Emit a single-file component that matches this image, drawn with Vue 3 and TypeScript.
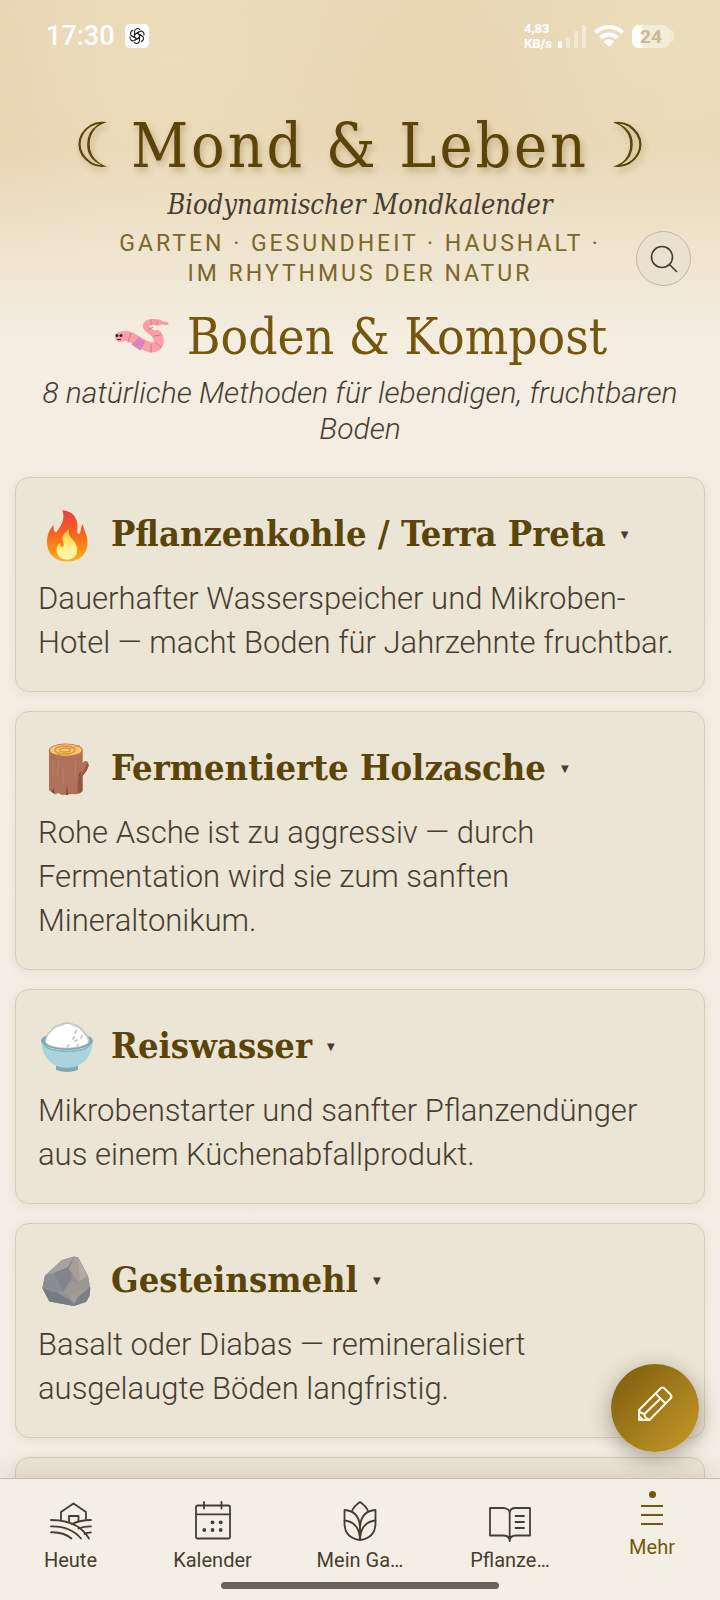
<script setup lang="ts">
import { ref } from 'vue'

interface Method {
  id: string
  title: string
  text: string
}

interface Tab {
  id: string
  label: string
}

const methods: Method[] = [
  { id: 'fire', title: 'Pflanzenkohle / Terra Preta', text: 'Dauerhafter Wasserspeicher und Mikroben-Hotel — macht Boden für Jahrzehnte fruchtbar.' },
  { id: 'wood', title: 'Fermentierte Holzasche', text: 'Rohe Asche ist zu aggressiv — durch Fermentation wird sie zum sanften Mineraltonikum.' },
  { id: 'rice', title: 'Reiswasser', text: 'Mikrobenstarter und sanfter Pflanzendünger aus einem Küchenabfallprodukt.' },
  { id: 'rock', title: 'Gesteinsmehl', text: 'Basalt oder Diabas — remineralisiert ausgelaugte Böden langfristig.' },
]

const tabs: Tab[] = [
  { id: 'today', label: 'Heute' },
  { id: 'calendar', label: 'Kalender' },
  { id: 'garden', label: 'Mein Ga…' },
  { id: 'plants', label: 'Pflanze…' },
  { id: 'more', label: 'Mehr' },
]

const activeTab = ref('more')
</script>

<template>
  <div class="app">
    <div class="status">
      <div class="status-left">
        <span class="clock">17:30</span>
        <svg class="app-badge" viewBox="0 0 24 24" aria-hidden="true">
          <rect width="24" height="24" rx="5" fill="#fff" />
          <g fill="none" stroke="#222" stroke-width="1.1">
            <path v-for="a in [0, 60, 120, 180, 240, 300]" :key="a" :transform="`rotate(${a} 12 12)`" d="M9.5 13.4V7.6a3 3 0 0 1 5.4-1.8M9.5 10.6l4.9-2.8" />
          </g>
        </svg>
      </div>
      <div class="status-right">
        <span class="speed"><span>4,83</span><span>KB/s</span></span>
        <svg class="signal" viewBox="0 0 28 23" aria-hidden="true" fill="#fff">
          <rect x="0" y="16" width="4" height="7" rx="1" />
          <g opacity=".4">
            <rect x="8" y="12" width="4" height="11" rx="1" />
            <rect x="16" y="6" width="4" height="17" rx="1" />
            <rect x="24" y="0" width="4" height="23" rx="1" />
          </g>
        </svg>
        <svg class="wifi" viewBox="0 0 30 22" aria-hidden="true">
          <g fill="none" stroke="#fff" stroke-width="4">
            <path d="M1.500 7.500A19.500 19.500 0 0 1 28.500 7.500" />
            <path d="M6.500 13A12 12 0 0 1 23.500 13" />
          </g>
          <path d="M9.500 16.500A8 8 0 0 1 20.500 16.500L16 21a1.500 1.500 0 0 1-2 0z" fill="#fff" />
        </svg>
        <span class="battery"><span class="cell">24</span><span class="cap"></span></span>
      </div>
    </div>

    <header class="header">
      <h1 class="brand"><span class="moon">☾</span><span>Mond &amp; Leben</span><span class="moon">☽</span></h1>
      <p class="claim">Biodynamischer Mondkalender</p>
      <p class="topics">Garten · Gesundheit · Haushalt · im Rhythmus der Natur</p>
      <button class="search" type="button" aria-label="Suche">
        <svg viewBox="0 0 28 28" aria-hidden="true" fill="none" stroke="#463d30" stroke-width="1.600" stroke-linecap="round">
          <circle cx="12" cy="12" r="10.500" />
          <path d="M19.700 19.700L26.500 26.500" />
        </svg>
      </button>
    </header>

    <main class="content">
      <h2 class="section-title">
        <svg class="worm" viewBox="0 0 58 40" aria-hidden="true" fill="none" stroke-linecap="round">
          <path d="M34 8C36 3 43 5 54 6.500" stroke="#f597a0" stroke-width="3" />
          <path d="M45 23C44 16 31 13 33 8C35 4 40 5 46 5.500" stroke="#f79ca4" stroke-width="6" stroke-linejoin="round" />
          <path d="M7 20C18 15 25 28 38 30.500C47 30 47 23 44 18" stroke="#f9a0a8" stroke-width="10" />
          <path d="M22 24C25 26.500 27 27.500 30 29" stroke="#d984bd" stroke-width="10" stroke-linecap="butt" />
          <path d="M18 16.500L15 25M38 27V35M43 26L48 30M41 19L48 18M35 13L40 10M38 3V8M44 4V8" stroke="#d97784" stroke-width="1" />
          <g fill="#30262a"><circle cx="4" cy="18.500" r="1.500" /><circle cx="8" cy="18.500" r="1.500" /></g>
          <path d="M4.500 22.500H7.500" stroke="#30262a" stroke-width="1" />
        </svg>
        <span>Boden &amp; Kompost</span>
      </h2>
      <p class="intro">8 natürliche Methoden für lebendigen, fruchtbaren Boden</p>

      <section class="cards">
        <article v-for="m in methods" :key="m.id" class="card">
          <h3 class="card-title">
            <button class="toggle" type="button" aria-expanded="false">
              <svg v-if="m.id === 'fire'" class="pic" viewBox="0 0 58 56" aria-hidden="true">
                <defs>
                  <linearGradient id="flame" x1="0" y1="0" x2="0" y2="1">
                    <stop offset="0" stop-color="#e5403d" />
                    <stop offset=".45" stop-color="#f8631f" />
                    <stop offset=".8" stop-color="#fb9412" />
                    <stop offset="1" stop-color="#fcb42c" />
                  </linearGradient>
                  <linearGradient id="flame-core" x1="0" y1="0" x2="0" y2="1">
                    <stop offset="0" stop-color="#ffc928" />
                    <stop offset=".6" stop-color="#fff08a" />
                    <stop offset="1" stop-color="#fff3b5" />
                  </linearGradient>
                </defs>
                <path d="M24.300 2.300C34 3 39 9 39.500 17C40 21 38 24.500 40.500 26C43.500 26 42 19 45 16C45 22 49.500 25 49.500 34C49.500 47 41 53.500 29.500 53.500C17 53.500 9 46 9 34C9 26 12 21 15.500 17C16 20 15 23 18 24.500C22 20 28 11 24.300 2.300Z" fill="url(#flame)" />
                <path d="M31 21C30 27 32 29 36 33C42 41 40 51.500 29 51.500C22 51.500 18.500 47 18.700 41C19 38 20 36 22 34.500C22.500 37 22 39 24.500 39C28 37 23 32 25 28C26.500 24.500 29 24 31 21Z" fill="url(#flame-core)" />
              </svg>
              <svg v-else-if="m.id === 'wood'" class="pic" viewBox="0 0 58 56" aria-hidden="true">
                <path d="M11 9V47Q11 50 15 50L17 52.500L20 51L24 53L35 52Q41 53 44.500 49V34Q49 29 50.700 24Q51 18.500 46.500 19L44.700 21V9Z" fill="#b0715a" />
                <path d="M44.500 49V34Q49 29 50.700 24Q50.500 21.500 49 20.500Q47 28 42 34Q38 40 40 51Q43 51 44.500 49Z" fill="#925643" />
                <path d="M21 18L19 34M25 26V41M38 18L37 35M15 18V33" stroke="#bd816a" fill="none" />
                <path d="M15.500 46L16.500 52L13.500 50ZM29 43L30 53H28ZM41 32L44 28L40 38Z" fill="#78412f" />
                <ellipse cx="27.800" cy="8.500" rx="17" ry="7" fill="#b77742" />
                <ellipse cx="27.800" cy="8" rx="15.800" ry="5.800" fill="#f8c775" />
                <g fill="none" stroke="#dc943a"><ellipse cx="27" cy="8" rx="10" ry="4" stroke-width="1.500" /><ellipse cx="27" cy="8" rx="5" ry="2" stroke-width="1.500" /></g>
                <path d="M31 7L42 3.500M22 12L18 13" stroke="#dc943a" fill="none" />
              </svg>
              <svg v-else-if="m.id === 'rice'" class="pic" viewBox="0 0 58 56" aria-hidden="true">
                <path d="M18 44H40V50Q29 54 18 50Z" fill="#7faab2" />
                <ellipse cx="29" cy="21" rx="26" ry="9" fill="#79a9b2" />
                <path d="M3.300 21Q4 40 20 46.500Q29 49 38 46.500Q54 40 55 21Q51 30 29 30.500Q7 30 3.300 21Z" fill="#a9d4db" />
                <path d="M3.300 21Q7 30 29 30.500Q51 30 55 21Q53 28 44 30.500Q29 34 14 30.500Q5 28 3.300 21Z" fill="#88b9c1" />
                <path d="M7 22C7 17 9 13 12 11C15 6 20 4 24 3.500C28 1 33 2 36 4C41 5 45 8 47 12C50 15 52 19 51.500 22C46 30 12 31 7 22Z" fill="#c9c9c4" />
                <path d="M8 22C9 17 10 14 13 12C16 8 20 6 25 5.500C29 3 32 4 35.500 6C40 7 43 9 45 13C48 16 50 19 50 22C46 29 12 30 8 22Z" fill="#fff" />
                <path d="M37 13L38.500 10.500M43 18L44 15.500M35 19L36.500 17M29 27L31 25M39 26L40.500 24.500M37 21L39 20" stroke="#c3c3c3" stroke-width="1.700" stroke-linecap="round" fill="none" />
              </svg>
              <svg v-else class="pic" viewBox="0 0 58 56" aria-hidden="true">
                <path d="M36 2.500L40.300 3.500L50 22L52.300 35L51.500 42L48 48L36 52L11.300 47.500L4.300 34L7 21.500L24 6Z" fill="#929091" />
                <path d="M36 2.500L24 6L7 21.500L16 19L30 13Z" fill="#a5a2a2" />
                <path d="M30 13L36 2.500L33 26L25 38L16 19Z" fill="#83838a" />
                <path d="M36 2.500L40.300 3.500L50 22L40 28L31 15Z" fill="#a79d99" />
                <path d="M50 22L52.300 35L40 37L33 46L31 42L25 38L33 26L40 28Z" fill="#9c9895" />
                <path d="M40 3.500L50 22L42 27Z" fill="#b5aaa4" />
                <path d="M33 44L40 37L52.300 33L51.500 42L48 48L36 52Z" fill="#7b7f82" />
                <path d="M31 42L39 37L52 33L40 43L36 50Z" fill="#a39b96" />
                <path d="M4.300 34L16 37L32 46L36 52L11.300 47.500Z" fill="#737c83" />
                <path d="M7 21.500L16 19L25 38L14 38L4.300 34Z" fill="#8b8d91" />
              </svg>
              <span>{{ m.title }}</span>
              <span class="caret" aria-hidden="true">▼</span>
            </button>
          </h3>
          <p class="card-text">{{ m.text }}</p>
        </article>
        <article class="card" aria-hidden="true"></article>
      </section>
    </main>

    <button class="fab" type="button" aria-label="Notiz schreiben">
      <svg viewBox="0 0 38 38" aria-hidden="true" fill="none" stroke="#fff8e6" stroke-width="2" stroke-linejoin="round" stroke-linecap="round">
        <path d="M3 35V25L24.500 3.500Q26.500 1.500 28.500 3.500L34.500 9.500Q36.500 11.500 34.500 13.500L13.500 35Z" />
        <path d="M19.500 8.500L29.500 18.500M8 29.500L24.500 13.500M3 25L5 28Q9 28 9 32L13.500 35M3 31L7 35" />
      </svg>
    </button>

    <nav class="tabs" aria-label="Hauptnavigation">
      <button v-for="t in tabs" :key="t.id" class="tab" :class="{ active: t.id === activeTab }" type="button" @click="activeTab = t.id">
        <span v-if="t.id === activeTab" class="dot"></span>
        <svg v-if="t.id === 'today'" class="icon" viewBox="0 0 42 42" aria-hidden="true">
          <path d="M11 19.500V12L23.500 3.500L36 12V19M19 22V16H28.500V21" />
          <path d="M1 20C16 20 31 25 39 38.500M1 26.300C13 26 24 30 31 38.500M1 32.300C9 32 16 34 21.500 38.500" />
          <path d="M41 20C33 20 28 21 22 24M41 26.300C36 26.300 32 27 28.500 28.500M41 32.300Q37 32.300 34.500 34" />
        </svg>
        <svg v-else-if="t.id === 'calendar'" class="icon" viewBox="0 0 42 42" aria-hidden="true">
          <rect x="4" y="5.500" width="34" height="33" rx="1.500" />
          <path d="M4 14.300H38M12 2V8.500M29.500 2V8.500" />
          <g class="filled"><circle cx="20.500" cy="22.300" r="1.900" /><circle cx="28.700" cy="22.300" r="1.900" /><circle cx="12.300" cy="30" r="1.900" /><circle cx="20.500" cy="30" r="1.900" /><circle cx="28.700" cy="30" r="1.900" /></g>
        </svg>
        <svg v-else-if="t.id === 'garden'" class="icon" viewBox="0 0 42 42" aria-hidden="true">
          <path d="M13 11Q15 6 21 2Q27 6 29 11" />
          <path d="M5.500 10V24Q6 38 21 40Q36 38 36.500 24V10Q21 11 21 29V40M5.500 10Q21 11 21 29" />
          <path d="M5.500 20.500Q20 22 21 39M36.500 20.500Q22 22 21 39" />
        </svg>
        <svg v-else-if="t.id === 'plants'" class="icon" viewBox="0 0 42 42" aria-hidden="true">
          <path d="M1 8H14C18 8 20.700 10 20.700 13C20.700 10 23 8 27 8H41V35.500H27C23 35.500 20.700 37 20.700 41C20.700 37 18 35.500 14 35.500H1ZM20.700 13V40M26.500 16H35M26.500 22H35M26.500 28H35" />
        </svg>
        <svg v-else class="menu" viewBox="0 0 22 22" aria-hidden="true">
          <path d="M0 2H22M0 11H22M0 20H22" />
        </svg>
        <span class="tab-label">{{ t.label }}</span>
      </button>
      <span class="home-bar"></span>
    </nav>
  </div>
</template>

<style>
html,
body {
  margin: 0;
  background: #f2ede2;
}
</style>

<style scoped>
.app {
  position: relative;
  display: flex;
  flex-direction: column;
  height: 100vh;
  overflow: hidden;
  color: #463d30;
  font-family: Roboto, "Liberation Sans", sans-serif;
  background:
    linear-gradient(to bottom, rgba(244, 237, 225, 0) 150px, rgba(244, 237, 225, 0.5) 240px, #f4ede1 340px, #f2eee4 100%),
    radial-gradient(260px 180px at 24% 60px, rgba(238, 222, 188, 0.6), transparent),
    radial-gradient(200px 180px at 92% 40px, rgba(235, 221, 187, 0.7), transparent),
    radial-gradient(120px 220px at 0 90px, rgba(229, 207, 172, 0.6), transparent),
    radial-gradient(260px 160px at 60% 90px, rgba(229, 208, 172, 0.5), transparent),
    #ead9b7;
}

h1,
h2,
h3,
p {
  margin: 0;
}

button {
  padding: 0;
  border: 0;
  background: none;
  color: inherit;
  font: inherit;
  cursor: pointer;
}

svg {
  display: block;
  flex: none;
}

.status {
  display: flex;
  flex: none;
  align-items: center;
  justify-content: space-between;
  height: 72px;
  padding: 0 46px;
  color: #fff;
}

.status-left,
.status-right {
  display: flex;
  align-items: center;
}

.status-left {
  gap: 10px;
}

.clock {
  font-size: 27px;
  font-weight: 500;
}

.app-badge {
  width: 24px;
  height: 24px;
}

.speed {
  display: flex;
  flex-direction: column;
  margin-right: 6px;
  font-size: 13px;
  font-weight: 700;
  line-height: 15px;
}

.signal {
  width: 28px;
  height: 23px;
  margin-right: 8px;
}

.wifi {
  width: 30px;
  height: 22px;
  margin-right: 8px;
}

.battery {
  display: flex;
  align-items: center;
}

.cell {
  width: 38px;
  border-radius: 7px;
  background: linear-gradient(to right, #fff 10px, rgba(255, 255, 255, 0.45) 10px);
  color: #c9b893;
  font-size: 19px;
  font-weight: 700;
  line-height: 23px;
  text-align: center;
}

.cap {
  width: 4px;
  height: 12px;
  border-radius: 0 6px 6px 0;
  background: rgba(255, 255, 255, 0.4);
}

.header {
  position: relative;
  display: flex;
  flex: none;
  flex-direction: column;
  align-items: center;
  padding: 36px 32px 0;
  text-align: center;
}

.brand {
  display: flex;
  align-items: center;
  gap: 2px;
  color: #5a4409;
  font: 400 62px/76px "DejaVu Serif Condensed", "Noto Serif", "DejaVu Serif", serif;
  letter-spacing: 3px;
  text-shadow: 2px 4px 6px rgba(90, 68, 9, 0.3);
  white-space: nowrap;
}

.moon {
  font-family: "DejaVu Sans", sans-serif;
  letter-spacing: 0;
}

.claim {
  margin-top: 3px;
  font: italic 27px/36px "DejaVu Serif Condensed", "Noto Serif", "DejaVu Serif", serif;
}

.topics {
  max-width: 520px;
  margin-top: 6px;
  color: #7b6729;
  font-size: 23px;
  line-height: 30px;
  letter-spacing: 3px;
  text-transform: uppercase;
}

.search {
  position: absolute;
  right: 29px;
  bottom: 3px;
  display: grid;
  place-items: center;
  width: 55px;
  height: 55px;
  border: 1px solid #c3b79b;
  border-radius: 50%;
  background: rgba(231, 223, 208, 0.7);
}

.search svg {
  width: 28px;
  height: 28px;
}

.content {
  flex: 1;
  min-height: 0;
  padding: 16px 15px 0;
  overflow: hidden;
}

.section-title {
  display: flex;
  align-items: center;
  justify-content: center;
  gap: 16px;
  color: #74570c;
  font: 400 51px/64px "DejaVu Serif Condensed", "Noto Serif", "DejaVu Serif", serif;
}

.worm {
  width: 58px;
  height: 40px;
}

.intro {
  margin-top: 6px;
  padding: 0 10px;
  font-size: 30px;
  font-style: italic;
  font-weight: 350;
  line-height: 36px;
  text-align: center;
}

.cards {
  display: flex;
  flex-direction: column;
  gap: 19px;
  padding-top: 30px;
}

.card {
  padding: 23px 20px 26px 22px;
  border: 1px solid #d5cdb6;
  border-radius: 14px;
  background: #ebe5d5;
  box-shadow: 0 2px 10px rgba(90, 68, 9, 0.08);
}

.toggle {
  display: flex;
  align-items: center;
  gap: 15px;
  color: #5a4409;
  font: 700 36px/64px "DejaVu Serif Condensed", "Noto Serif", "DejaVu Serif", serif;
}

.pic {
  width: 58px;
  height: 56px;
  margin-top: 6px;
}

.caret {
  margin-top: 4px;
  color: #463d30;
  font: 400 10px/20px "DejaVu Sans", sans-serif;
}

.card-text {
  margin-top: 12px;
  font-size: 31px;
  font-weight: 350;
  line-height: 44px;
}

.fab {
  position: absolute;
  right: 21px;
  bottom: 148px;
  display: grid;
  place-items: center;
  width: 88px;
  height: 88px;
  padding-bottom: 8px;
  border-radius: 50%;
  background: linear-gradient(135deg, #7a5b0e, #c79a27);
  box-shadow: 0 6px 22px rgba(50, 40, 20, 0.4);
}

.fab svg {
  width: 38px;
  height: 38px;
}

.tabs {
  position: relative;
  display: grid;
  flex: none;
  grid-template-columns: 141fr 143fr 152fr 148fr 136fr;
  height: 121px;
  border-top: 1px solid #c6bda5;
  background: #f4efe4;
  box-shadow: 0 -4px 24px rgba(70, 61, 48, 0.12);
}

.tab {
  display: flex;
  flex-direction: column;
  align-items: center;
  padding-top: 21px;
}

.tab.active {
  padding-top: 12px;
  color: #74570c;
}

.icon {
  width: 42px;
  height: 42px;
  fill: none;
  stroke: currentColor;
  stroke-width: 1.8px;
  stroke-linecap: round;
  stroke-linejoin: round;
}

.filled {
  fill: currentColor;
  stroke: none;
}

.menu {
  width: 22px;
  height: 22px;
  margin-top: 6px;
  fill: none;
  stroke: currentColor;
  stroke-width: 2px;
}

.dot {
  width: 7px;
  height: 7px;
  border-radius: 50%;
  background: #74570c;
}

.tab-label {
  margin-top: 6px;
  font-size: 20px;
  line-height: 24px;
  white-space: nowrap;
}

.active .tab-label {
  margin-top: 9px;
}

.home-bar {
  position: absolute;
  bottom: 11px;
  left: 50%;
  width: 278px;
  height: 7px;
  margin-left: -139px;
  border-radius: 4px;
  background: #66645d;
}
</style>
